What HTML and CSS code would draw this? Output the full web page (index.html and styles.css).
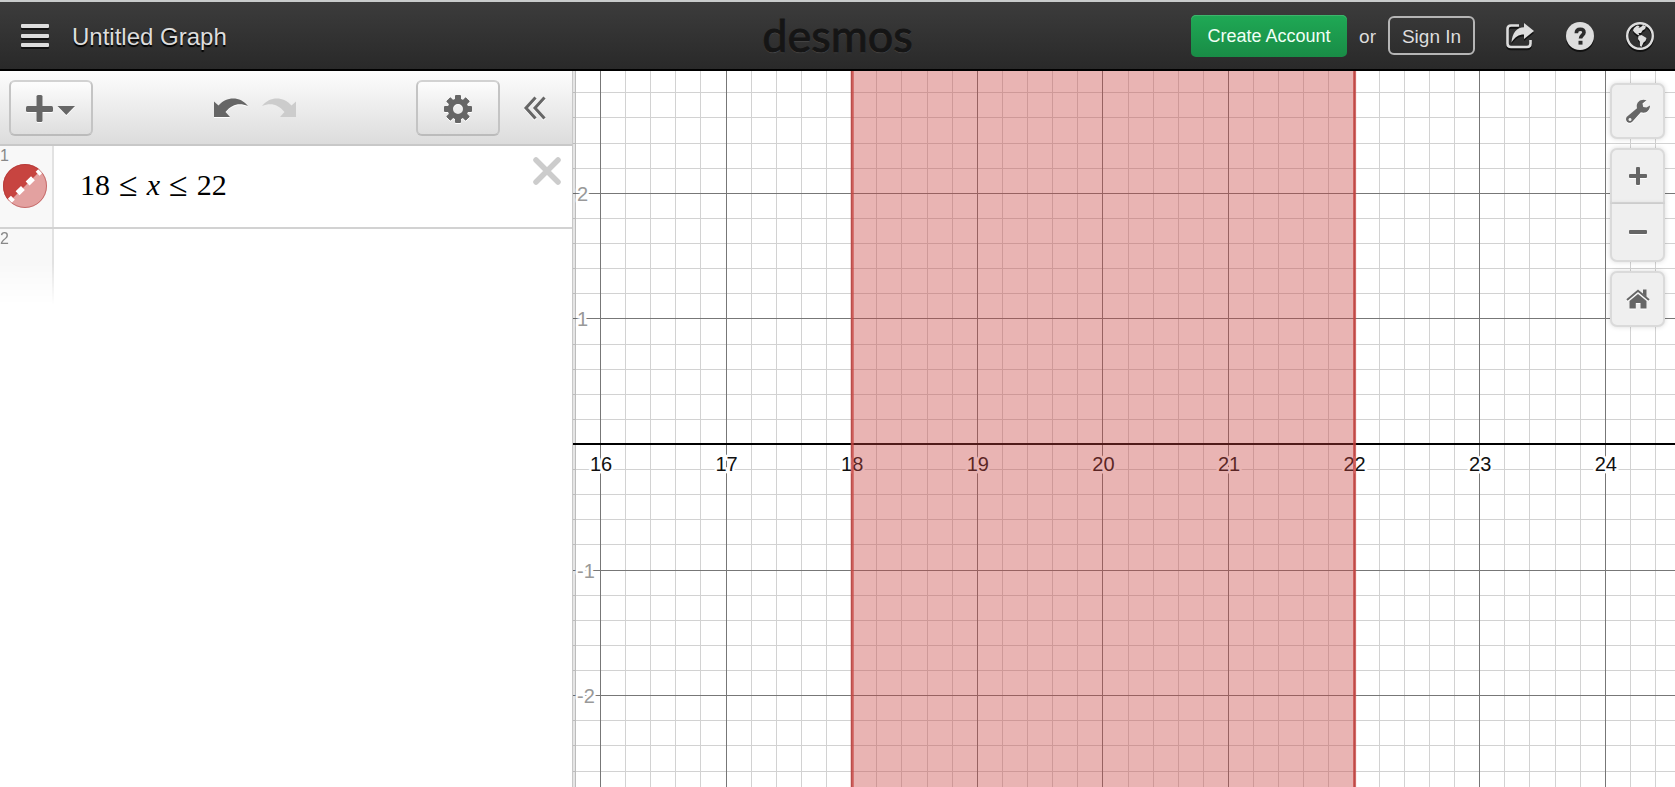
FILE: index.html
```html
<!DOCTYPE html>
<html lang="en">
  <head>
    <meta charset="UTF-8" />
    <meta name="viewport" content="width=device-width, initial-scale=1.0" />
    <title>Untitled Graph</title>
    <link rel="stylesheet" href="styles.css">
  </head>
  <body>
    <header class="header">
      <div class="header-left">
        <button class="icon-btn" aria-label="Menu">
          <svg class="icon-shadow" width="28" height="26" viewBox="0 0 28 26">
            <rect x="0" y="1" width="28" height="4" rx="1" />
            <rect x="0" y="11" width="28" height="4" rx="1" />
            <rect x="0" y="20" width="28" height="4" rx="1" />
          </svg>
        </button>
        <span class="graph-title">Untitled Graph</span>
      </div>
      <div class="logo">desmos</div>
      <div class="header-right">
        <button class="create-btn">Create Account</button>
        <span class="or">or</span>
        <button class="signin-btn">Sign In</button>
        <div class="header-icons">
          <button class="icon-btn" aria-label="Share">
            <svg class="icon-shadow" width="28" height="28" viewBox="0 0 28 28">
              <path d="M13 3.500H5Q1.500 3.500 1.500 7V21.500Q1.500 25 5 25H21Q24.500 25 24.500 21.500V18" fill="none" stroke="#ddd" stroke-width="2.600" />
              <path d="M18 1 28 9 18 17V12.500C12.500 12.500 9 15 5.500 20.500C6 11 11 5.200 18 5.200Z" />
            </svg>
          </button>
          <button class="icon-btn" aria-label="Help">
            <svg class="icon-shadow" width="28" height="28" viewBox="0 0 28 28">
              <circle cx="14" cy="14" r="14" />
              <path d="M10.300 11.200C10.300 8.500 12 7.300 14.300 7.300C16.700 7.300 18 8.700 18 10.500C18 13 14.500 13.400 14.500 16.600" fill="none" stroke="#2c2c2c" stroke-width="3.600" />
              <rect x="12.500" y="18.800" width="4" height="3.800" fill="#2c2c2c" />
            </svg>
          </button>
          <button class="icon-btn" aria-label="Language">
            <svg class="icon-shadow" width="28" height="28" viewBox="0 0 28 28">
              <circle cx="14" cy="14" r="12.800" fill="none" stroke="#ddd" stroke-width="2.400" />
              <path d="M8 6 11 3.500 13.500 4 12.500 6 15 5 17 3 20 4.500 19 7 16.500 8.500 15 11 12.500 11 13.500 13.500 11 12.500 8.500 10.500 7 8.500Z" />
              <path d="M12.500 14 15.500 13 20.500 16 19.500 19 17.500 20.500 15.500 25 14 24 13.800 19.500 12 17Z" />
            </svg>
          </button>
        </div>
      </div>
    </header>

    <main class="main">
      <section class="side">
        <div class="toolbar">
          <button class="tool-btn" aria-label="Add item">
            <svg class="icon-light" width="50" height="28" viewBox="0 0 50 28">
              <rect x="0" y="11" width="27" height="6" rx="1.500" />
              <rect x="10.500" y="0" width="6" height="27" rx="1.500" />
              <path d="M31.500 11H49L40.300 20Z" />
            </svg>
          </button>
          <div class="history">
            <button class="icon-btn" aria-label="Undo">
              <svg class="icon-light" width="34" height="20" viewBox="0 0 34 20">
                <path d="M0 3.500 4.500 7.500C12 -1.500 26 -2.500 34 8C25.500 4.500 18 6 11.500 14L16 19H0Z" />
              </svg>
            </button>
            <button class="icon-btn" aria-label="Redo" disabled>
              <svg class="icon-off" width="34" height="20" viewBox="0 0 34 20">
                <path d="M34 3.500 29.500 7.500C22 -1.500 8 -2.500 0 8C8.500 4.500 16 6 22.500 14L18 19H34Z" />
              </svg>
            </button>
          </div>
          <button class="tool-btn" aria-label="Edit list">
            <svg class="icon-light" width="28" height="28" viewBox="-14 -14 28 28">
              <clipPath id="ring">
                <path d="M-14 -14H14V-7H-14ZM-14 7H14V14H-14Z" />
              </clipPath>
              <circle r="7.700" fill="none" stroke="#666" stroke-width="5.400" />
              <rect x="-3" y="-14" width="6" height="28" rx="1" clip-path="url(#ring)" />
              <rect x="-3" y="-14" width="6" height="28" rx="1" clip-path="url(#ring)" transform="rotate(45)" />
              <rect x="-3" y="-14" width="6" height="28" rx="1" clip-path="url(#ring)" transform="rotate(90)" />
              <rect x="-3" y="-14" width="6" height="28" rx="1" clip-path="url(#ring)" transform="rotate(135)" />
            </svg>
          </button>
          <button class="collapse-btn" aria-label="Hide list">
            <svg class="icon-light" width="22" height="24" viewBox="0 0 22 24">
              <path d="M11.500 1.500 2 12 11.500 22.500M20.500 1.500 11 12 20.500 22.500" fill="none" stroke="#666" stroke-width="3" />
            </svg>
          </button>
        </div>

        <div class="row">
          <div class="gutter">
            <span class="row-number">1</span>
            <button class="color-btn" aria-label="Hide graph">
              <svg width="44" height="44" viewBox="0 0 44 44">
                <clipPath id="dot"><circle cx="22" cy="22" r="22" /></clipPath>
                <g clip-path="url(#dot)">
                  <rect width="44" height="44" fill="#e3a1a0" />
                  <path d="M0 44V0H44Z" fill="#c74440" />
                  <path d="M4.500 39 40 4.500" stroke="#fff" stroke-width="5.500" stroke-dasharray="7.500 6.500" />
                </g>
                <circle cx="22" cy="22" r="21.500" fill="none" stroke="#a33" stroke-opacity=".5" />
              </svg>
            </button>
          </div>
          <div class="math" role="textbox" contenteditable="true" aria-label="Expression 1"><span>18</span><span class="rel">≤</span><var>x</var><span class="rel">≤</span><span>22</span></div>
          <button class="delete-btn" aria-label="Delete">
            <svg width="28" height="28" viewBox="0 0 28 28">
              <path d="M3 3 25 25M25 3 3 25" stroke="#ccc" stroke-width="5.500" stroke-linecap="round" />
            </svg>
          </button>
        </div>
        <div class="row row-new">
          <div class="gutter">
            <span class="row-number">2</span>
          </div>
        </div>
      </section>

      <section class="graph">
        <svg id="grid" class="grid"></svg>
        <div class="graph-tools">
          <button class="map-btn" aria-label="Graph settings">
            <svg class="icon-light" width="24" height="24" viewBox="0 0 24 24">
              <path fill-rule="evenodd" d="M20.500 1.200 16.500 4.500 17.200 8 20.500 8.500 24 6.500C24 11.500 20 15 14.800 13.200L6.500 22.500C4.500 24.600 1.800 24 .7 22.300C-.5 20.500 0 18.500 1.500 17.300L11 9.300C9.500 3.500 14.500 -1 20.500 1.200ZM4 19A1.500 1.500 0 1 0 4 22A1.500 1.500 0 1 0 4 19Z" />
            </svg>
          </button>
          <div class="zoom">
            <button class="map-btn" aria-label="Zoom in">
              <svg class="icon-light" width="18" height="18" viewBox="0 0 18 18">
                <rect x="0" y="7" width="18" height="4" rx="1" />
                <rect x="7" y="0" width="4" height="18" rx="1" />
              </svg>
            </button>
            <button class="map-btn" aria-label="Zoom out">
              <svg class="icon-light" width="18" height="18" viewBox="0 0 18 18">
                <rect x="0" y="7" width="18" height="4" rx="1" />
              </svg>
            </button>
          </div>
          <button class="map-btn" aria-label="Default view">
            <svg class="icon-light" width="24" height="20" viewBox="0 0 24 20">
              <path d="M12 5 20.500 12V19.500H14.500V14H9.800V19.500H3.500V12Z" />
              <path d="M1 11 12 1.800 23 11" fill="none" stroke="#666" stroke-width="2" />
              <path d="M17 .5H20.500V8L17 5Z" />
            </svg>
          </button>
        </div>
      </section>
    </main>

    <script>
      const UNIT = 125.6; // pixels per graph unit
      const START = 16; // first labelled x value
      const OFFSET_X = 28; // where START falls in the graph
      const AXIS_RATIO = 0.521; // height of the x axis

      const grid = document.getElementById("grid");

      function add(name, attrs, text) {
        const el = document.createElementNS("http://www.w3.org/2000/svg", name);
        for (const key in attrs) {
          el.setAttribute(key, attrs[key]);
        }
        if (text !== undefined) {
          el.textContent = text;
        }
        grid.appendChild(el);
      }

      function draw() {
        const width = grid.clientWidth;
        const height = grid.clientHeight;
        const axisY = Math.round(height * AXIS_RATIO);
        const toX = (x) => OFFSET_X + (x - START) * UNIT;
        const toY = (y) => axisY - y * UNIT;

        grid.innerHTML = "";

        const lines = { minor: "", major: "" };
        for (let i = -1; toX(START + i / 5) < width; i++) {
          const x = Math.round(toX(START + i / 5)) - 0.5;
          lines[i % 5 === 0 ? "major" : "minor"] += `M${x} 0V${height}`;
        }
        const top = Math.floor((axisY / UNIT) * 5);
        for (let i = top; toY(i / 5) < height; i--) {
          const y = Math.round(toY(i / 5)) + 0.5;
          lines[i % 5 === 0 ? "major" : "minor"] += `M0 ${y}H${width}`;
        }
        add("path", { class: "minor", d: lines.minor });
        add("path", { class: "major", d: lines.major });
        add("path", { class: "axis", d: `M0 ${axisY}H${width}` });

        for (let x = START; toX(x) < width; x++) {
          add("text", { class: "label-x", x: toX(x), y: axisY + 27 }, x);
        }
        for (let y = Math.floor(top / 5); toY(y) < height; y--) {
          if (y !== 0) {
            add("text", { class: "label-y", x: 4, y: toY(y) + 8 }, y);
          }
        }

        // 18 <= x <= 22
        add("rect", { class: "region", x: toX(18), y: 0, width: toX(22) - toX(18), height: height });
        add("path", { class: "edge", d: `M${toX(18)} 0V${height}M${toX(22)} 0V${height}` });
      }

      window.addEventListener("resize", draw);
      draw();
    </script>
  </body>
</html>
```
FILE: styles.css
```css
* {
  box-sizing: border-box;
}
body {
  margin: 0;
  height: 100vh;
  display: flex;
  flex-direction: column;
  overflow: hidden;
  background-color: #fff;
  font-family: "Liberation Sans", Arial, sans-serif;
}
button {
  margin: 0;
  padding: 0;
  border: none;
  background: none;
  font-family: inherit;
  cursor: pointer;
}
svg {
  display: block;
}

/* header */
.header {
  display: grid;
  grid-template-columns: 1fr auto 1fr;
  align-items: center;
  height: 71px;
  padding: 0 21px;
  border-top: 2px solid #c9cccc;
  border-bottom: 2px solid #000;
  background: linear-gradient(#3c3c3c, #292929);
  color: #ddd;
}
.header-left,
.header-right {
  display: flex;
  align-items: center;
}
.header-left {
  gap: 23px;
}
.header-right {
  justify-content: flex-end;
}
.graph-title {
  padding-top: 2px;
  font-size: 24px;
  text-shadow: 0 2px 1px #000;
}
.icon-shadow {
  fill: #ddd;
  overflow: visible;
  filter: drop-shadow(0 2px 0 #111);
}
.logo {
  padding-bottom: 2px;
  font-family: Lato, sans-serif;
  font-size: 45px;
  line-height: 60px;
  color: #151515;
  text-shadow: 0 1px 1px #555;
  -webkit-text-stroke: 1px #151515;
}
.create-btn {
  height: 42px;
  width: 156px;
  padding-top: 2px;
  border-radius: 5px;
  background: linear-gradient(#1fa955, #198c46);
  box-shadow: inset 0 1px 0 #3db56c;
  color: #f0fff5;
  font-size: 18px;
}
.or {
  margin: 0 12px;
  padding-top: 2px;
  font-size: 19px;
}
.signin-btn {
  height: 39px;
  width: 87px;
  padding-top: 2px;
  border: 2px solid #b5b5b5;
  border-radius: 6px;
  color: #ddd;
  font-size: 19px;
}
.header-icons {
  display: flex;
  gap: 32px;
  margin-left: 31px;
}

/* expression list */
.main {
  flex: 1;
  display: flex;
  min-height: 0;
}
.side {
  position: relative;
  z-index: 1;
  flex: none;
  width: 573px;
  border-right: 1px solid #c8c8c8;
  background-color: #fff;
  box-shadow: 3px 0 0 rgba(0, 0, 0, 0.1);
}
.toolbar {
  display: flex;
  align-items: center;
  justify-content: space-between;
  height: 75px;
  padding: 0 26px 0 9px;
  border-bottom: 2px solid #c8c8c8;
  background: linear-gradient(#fdfdfd, #dcdcdc);
}
.tool-btn {
  display: flex;
  align-items: center;
  justify-content: center;
  width: 84px;
  height: 56px;
  padding-top: 2px;
  border: 2px solid #c4c4c4;
  border-top-color: #d2d2d2;
  border-bottom-color: #bbb;
  border-radius: 6px;
  background: linear-gradient(#fdfdfd, #dedede);
}
.history {
  display: flex;
  gap: 14px;
  margin: 0 auto;
}
.collapse-btn {
  margin-left: 24px;
}
.icon-light {
  fill: #666;
  overflow: visible;
  filter: drop-shadow(0 1px 0 #fff);
}
.icon-off {
  fill: #ccc;
}
.row {
  display: flex;
  height: 83px;
  border-bottom: 2px solid #d2d2d2;
}
.gutter {
  flex: none;
  width: 54px;
  border-right: 2px solid #e2e2e2;
  background-color: #f8f8f8;
}
.row-number {
  display: block;
  height: 18px;
  font-size: 16px;
  line-height: 20px;
  color: #888;
}
.color-btn {
  margin-left: 3px;
}
.math {
  flex: 1;
  display: flex;
  align-items: center;
  gap: 9px;
  padding: 0 0 4px 26px;
  outline: none;
  color: #000;
  font-family: "Liberation Serif", "Times New Roman", serif;
  font-size: 30px;
}
.rel {
  font-size: 34px;
}
.delete-btn {
  align-self: flex-start;
  margin: 11px 11px 0 0;
}
.row-new {
  height: 76px;
  border-bottom: none;
}
.row-new .gutter {
  mask-image: linear-gradient(#000 45%, transparent);
}

/* graph */
.graph {
  position: relative;
  flex: 1;
  min-width: 0;
}
.grid {
  width: 100%;
  height: 100%;
}
.minor,
.major,
.axis,
.edge {
  fill: none;
}
.minor {
  stroke: #d2d2d2;
}
.major {
  stroke: #777;
}
.axis {
  stroke: #000;
  stroke-width: 2px;
}
.label-x,
.label-y {
  font-size: 20px;
  paint-order: stroke;
  stroke: #fff;
  stroke-width: 5px;
  stroke-linejoin: round;
}
.label-x {
  fill: #111;
  text-anchor: middle;
}
.label-y {
  fill: #999;
}
.region {
  fill: #c74440;
  fill-opacity: 0.4;
}
.edge {
  stroke: #c74440;
  stroke-width: 3px;
  stroke-opacity: 0.8;
}
.graph-tools {
  position: absolute;
  top: 12px;
  right: 10px;
  display: flex;
  flex-direction: column;
  gap: 9px;
}
.map-btn {
  display: flex;
  align-items: center;
  justify-content: center;
  width: 55px;
  height: 56px;
  border: 2px solid #dadada;
  border-radius: 7px;
  background-color: #efefef;
  box-shadow: 0 0 5px rgba(0, 0, 0, 0.15);
}
.zoom .map-btn:first-child {
  border-radius: 7px 7px 0 0;
}
.zoom .map-btn:last-child {
  height: 58px;
  border-top: none;
  border-radius: 0 0 7px 7px;
}
```
